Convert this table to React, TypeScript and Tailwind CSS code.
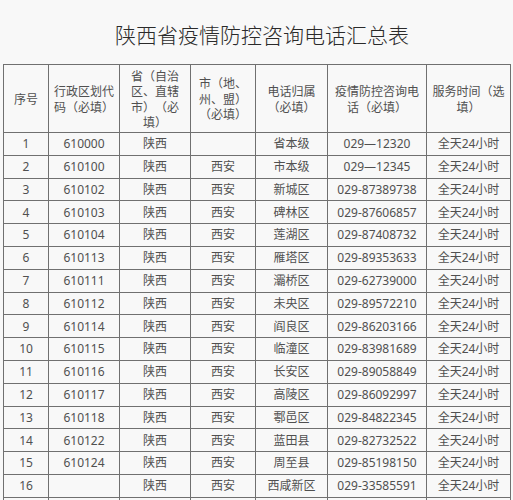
const rows: [string, string, string, string, string, string][] = [
  ["1", "610000", "陕西", "", "省本级", "029—12320"],
  ["2", "610100", "陕西", "西安", "市本级", "029—12345"],
  ["3", "610102", "陕西", "西安", "新城区", "029-87389738"],
  ["4", "610103", "陕西", "西安", "碑林区", "029-87606857"],
  ["5", "610104", "陕西", "西安", "莲湖区", "029-87408732"],
  ["6", "610113", "陕西", "西安", "雁塔区", "029-89353633"],
  ["7", "610111", "陕西", "西安", "灞桥区", "029-62739000"],
  ["8", "610112", "陕西", "西安", "未央区", "029-89572210"],
  ["9", "610114", "陕西", "西安", "阎良区", "029-86203166"],
  ["10", "610115", "陕西", "西安", "临潼区", "029-83981689"],
  ["11", "610116", "陕西", "西安", "长安区", "029-89058849"],
  ["12", "610117", "陕西", "西安", "高陵区", "029-86092997"],
  ["13", "610118", "陕西", "西安", "鄠邑区", "029-84822345"],
  ["14", "610122", "陕西", "西安", "蓝田县", "029-82732522"],
  ["15", "610124", "陕西", "西安", "周至县", "029-85198150"],
  ["16", "", "陕西", "西安", "西咸新区", "029-33585591"],
];

// header cells, line breaks as in the original sheet
const headers: string[][] = [
  ["序号"],
  ["行政区划代", "码（必填）"],
  ["省（自治", "区、直辖", "市）（必", "填）"],
  ["市（地、", "州、盟）", "（必填）"],
  ["电话归属", "（必填）"],
  ["疫情防控咨询电", "话（必填）"],
  ["服务时间（选", "填）"],
];

const widths = [45, 71, 71, 65, 72, 99, 84];

const cell = "border border-[#707070] text-center align-middle p-0";
const cjk = { fontFamily: '"Noto Sans CJK SC", sans-serif', textSpacingTrim: "space-all" } as React.CSSProperties;

export default function App() {
  return (
    <div
      className="w-[513px] h-[500px] overflow-hidden bg-[#f8f8f8] text-[#505050]"
      style={{ fontFamily: '"Noto Sans", "Noto Sans CJK SC", sans-serif' }}
    >
      <div
        className="pt-[19px] pl-[11px] h-[64px] text-center text-[21px] leading-[30px] font-light text-[#2a2a2a]"
        style={cjk}
      >
        陕西省疫情防控咨询电话汇总表
      </div>

      <table className="ml-[3px] w-[507px] table-fixed border-collapse text-[12px] leading-[15.5px]">
        <colgroup>
          {widths.map((w, i) => (
            <col key={i} style={{ width: w }} />
          ))}
        </colgroup>
        <thead>
          <tr className="h-[68px]">
            {headers.map((lines, i) => (
              <th key={i} className={`${cell} font-normal`} style={cjk}>
                {lines.map((l, j) => (
                  <div key={j} className="whitespace-nowrap">
                    {l}
                  </div>
                ))}
              </th>
            ))}
          </tr>
        </thead>
        <tbody>
          {rows.map((r) => (
            <tr key={r[0]} className="h-[22.8px]">
              {r.map((v, i) => (
                <td key={i} className={`${cell} whitespace-nowrap`}>
                  {v}
                </td>
              ))}
              <td className={`${cell} whitespace-nowrap`}>全天24小时</td>
            </tr>
          ))}
          <tr className="h-[22.8px]">
            {widths.map((_, i) => (
              <td key={i} className={cell}></td>
            ))}
          </tr>
        </tbody>
      </table>
    </div>
  );
}
